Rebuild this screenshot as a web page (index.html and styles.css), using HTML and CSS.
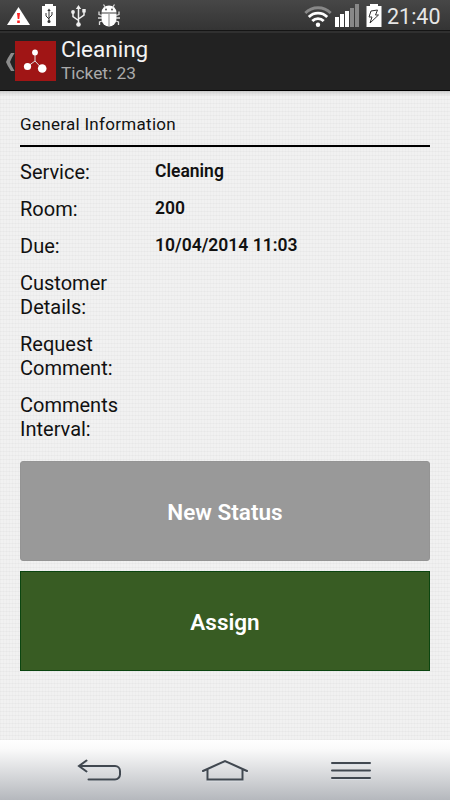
FILE: index.html
```
<!DOCTYPE html>
<html lang="en">
<head>
    <meta charset="UTF-8">
    <meta name="viewport" content="width=device-width, initial-scale=1.0">
    <title>Ticket: 23</title>
    <link rel="stylesheet" href="styles.css">
</head>
<body>
    <div class="statusbar">
        <svg class="status-icons" width="130" height="30" viewBox="0 0 130 30">
            <path d="M18.500 7L30 25H7z" fill="#fff"/>
            <path d="M17 13h3l-.7 6h-1.600zM17.200 20.500h2.600v2.500h-2.600z" fill="#f22"/>
            <path d="M45 4h8v2h3v20H42V6h3z" fill="#fff"/>
            <path d="M49 10v12M46 13v3l3 3M52 12v3l-3 3" fill="none" stroke="#333" stroke-width="1"/>
            <path d="M49 8.500l1.700 2.500h-3.400z" fill="#333"/>
            <circle cx="49" cy="21.500" r="1.500" fill="#333"/>
            <path d="M78.500 8v16M73 12v4.500l5.500 4M84 11v4l-5.500 4" fill="none" stroke="#eee" stroke-width="1.500"/>
            <path d="M78.500 5l2.700 4h-5.400zM82.300 9h3.400v3.400h-3.400z" fill="#eee"/>
            <circle cx="73" cy="12" r="1.900" fill="#eee"/>
            <circle cx="78.500" cy="24.500" r="2.300" fill="#eee"/>
            <path d="M101.500 12.500a7.500 7 0 0 1 15 0z" fill="#fff"/>
            <path d="M101.500 13.500h15v5a7.500 8 0 0 1-15 0z" fill="#fff"/>
            <path d="M103.500 4.500l2 3M114.500 4.500l-2 3M102 15.500l-3-1v-3M102 18h-4M102 21l-2.500 1v3M116 15.500l3-1v-3M116 18h4M116 21l2.500 1v3" fill="none" stroke="#ddd" stroke-width="1.300"/>
            <path d="M109 14v12" stroke="#888"/>
            <circle cx="106" cy="9.500" r=".9" fill="#444"/>
            <circle cx="112" cy="9.500" r=".9" fill="#444"/>
        </svg>
        <svg class="status-icons" width="82" height="30" viewBox="304 0 82 30">
            <g fill="none" stroke-width="2.800">
                <path d="M305.300 13a18 18 0 0 1 25.400 0" stroke="#888"/>
                <path d="M308.800 17a13 13 0 0 1 18.400 0M312.300 21a8 8 0 0 1 11.400 0" stroke="#fff"/>
            </g>
            <circle cx="318" cy="24.800" r="2.200" fill="#fff"/>
            <path d="M335 17h4v10h-4zM340 14h4v13h-4zM345 11h4v16h-4z" fill="#fff"/>
            <path d="M350 8h4v19h-4zM355 4h4v23h-4z" fill="#888"/>
            <path d="M370 4h8v2h3.500v21h-15V6h3.500z" fill="#fff"/>
            <path d="M371 11l6.500-1-2 5h3l-8.500 8 2-6h-3z" fill="none" stroke="#333"/>
        </svg>
        <span class="clock">21:40</span>
    </div>
    <div class="actionbar">
        <svg class="up-arrow" width="10" height="20" viewBox="0 0 10 20">
            <path d="M6 1h3.500Q6.500 6 5 10q1.500 4 4.500 9H6Q2.500 14 1 10 2.500 6 6 1z" fill="#8c8c8c"/>
        </svg>
        <svg class="app-logo" width="41" height="40" viewBox="0 0 41 40">
            <rect width="41" height="40" fill="#a01515"/>
            <path d="M20 11.500V20l-7.500 5.500M20 20l7 7.500" fill="none" stroke="#ddd" stroke-width="1"/>
            <circle cx="20" cy="11.500" r="2.900" fill="#fff"/>
            <circle cx="12.500" cy="25.500" r="3.600" fill="#fff"/>
            <circle cx="27.200" cy="27.500" r="4.300" fill="#fff"/>
        </svg>
        <div class="titles">
            <h1>Cleaning</h1>
            <p>Ticket: 23</p>
        </div>
    </div>
    <div class="content">
        <h2>General Information</h2>
        <dl class="info">
            <dt>Service:</dt>
            <dd>Cleaning</dd>
            <dt>Room:</dt>
            <dd>200</dd>
            <dt>Due:</dt>
            <dd>10/04/2014 11:03</dd>
            <dt>Customer Details:</dt>
            <dd></dd>
            <dt>Request Comment:</dt>
            <dd></dd>
            <dt>Comments Interval:</dt>
            <dd></dd>
        </dl>
        <button class="status-button">New Status</button>
        <button class="assign-button">Assign</button>
    </div>
    <div class="navbar">
        <svg width="46" height="26" viewBox="77 757 46 26">
            <path class="nav-shine" d="M87 761.500l-8 5.500 8 5.500M80 767h35a5 5 0 0 1 5 5v3a5 5 0 0 1-5 5H88.500"/>
            <path class="nav-line" d="M86.500 760.500l-7.500 5.500 7.500 5.500M80 766h35a5 5 0 0 1 5 5v3.500a5 5 0 0 1-5 5H88.500"/>
        </svg>
        <svg class="nav-home" width="50" height="26" viewBox="200 757 50 26">
            <path class="nav-shine" d="M203 772l22-10 22 10M208 770v10.500h34.500V770"/>
            <path class="nav-line" d="M203 771l22-10 22 10M207.500 769.500v10h35v-10"/>
        </svg>
        <svg width="42" height="26" viewBox="330 757 42 26">
            <path class="nav-shine" d="M332 764h38M332 771.500h38M332 779h38"/>
            <path class="nav-line" d="M332 763h38M332 770.500h38M332 778h38"/>
        </svg>
    </div>
</body>
</html>
```
FILE: styles.css
```
* {
    box-sizing: border-box;
}
body {
    font-family: Roboto, sans-serif;
    margin: 0;
    height: 800px;
    display: flex;
    flex-direction: column;
    color: #111;
    overflow: hidden;
}
h1, h2, p, dl, dd {
    margin: 0;
    font-weight: normal;
}
svg {
    display: block;
}
.statusbar {
    height: 31px;
    display: flex;
    align-items: flex-start;
    background: linear-gradient(#474747, #343434);
    border-bottom: 1px solid #151515;
}
.status-icons + .status-icons {
    margin-left: 174px;
}
.clock {
    margin-left: 1px;
    color: #e6e6e6;
    font-size: 21.5px;
    line-height: 33px;
}
.actionbar {
    height: 60px;
    display: flex;
    align-items: center;
    background-color: #222;
    border-top: 2px solid #303030;
    border-bottom: 1px solid #000;
}
.up-arrow {
    margin-left: 5px;
}
.app-logo {
    margin-top: -1px;
}
.titles {
    margin-left: 5px;
    padding-bottom: 2px;
}
.titles h1 {
    color: #f3f3f3;
    font-size: 22.5px;
    line-height: 25px;
}
.titles p {
    color: #aaa;
    font-size: 17.3px;
    line-height: 22px;
}
.content {
    flex: 1;
    padding: 20px 20px 0;
    /* woven paper: fine threads over a coarser weave */
    background-color: #f1f1f1;
    background-image:
        linear-gradient(rgba(0, 0, 0, 0.14), transparent 5px),
        repeating-linear-gradient(90deg, rgba(0, 0, 0, 0.015) 0 1px, transparent 1px 3px),
        repeating-linear-gradient(rgba(0, 0, 0, 0.025) 0 1px, transparent 1px 4px);
}
.content h2 {
    height: 36px;
    border-bottom: 2px solid #000;
    font-size: 17px;
    letter-spacing: 0.3px;
    line-height: 26px;
}
.info {
    display: grid;
    grid-template-columns: 110px 1fr;
    gap: 13px 25px;
    padding: 13px 0 20px;
    line-height: 24px;
}
.info dt {
    font-size: 20px;
}
.info dd {
    font-size: 17.5px;
    font-weight: 600;
    line-height: 22px;
}
button {
    display: block;
    width: 100%;
    height: 100px;
    margin-bottom: 10px;
    padding: 2px 0 0;
    color: #fff;
    font-family: inherit;
    font-size: 22.5px;
    font-weight: 600;
}
.status-button {
    background-color: #999;
    border: 1px solid #949494;
    border-radius: 3px;
}
.assign-button {
    background-color: #385c23;
    border: 1px solid #0b4510;
}
.navbar {
    height: 60px;
    display: flex;
    justify-content: space-between;
    padding: 17px 78px 0 77px;
    background: linear-gradient(#fff, #fafafa 15%, #b5b8bd);
}
.nav-home {
    margin-right: 4px;
}
.nav-line, .nav-shine {
    fill: none;
    stroke-linecap: round;
    stroke-width: 2;
}
.nav-line {
    stroke: #414850;
}
.nav-shine {
    stroke: #dce0e5;
}
```
